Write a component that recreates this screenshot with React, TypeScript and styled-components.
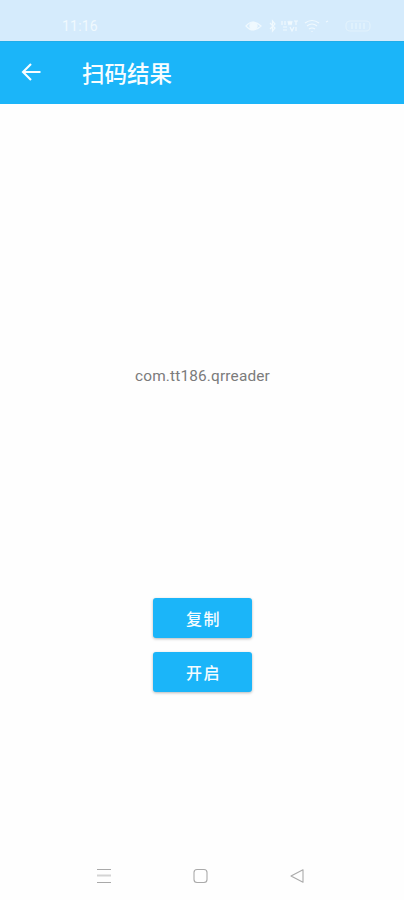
import React from "react";
import styled, { createGlobalStyle } from "styled-components";

const Global = createGlobalStyle`
  * { box-sizing: border-box; }
  html, body { margin: 0; padding: 0; background: #fefefe; }
`;

const Screen = styled.div`
  width: 100%;
  height: 900px;
  display: flex;
  flex-direction: column;
  background: #fefefe;
  overflow: hidden;
  font-family: Roboto, "Noto Sans CJK SC", sans-serif;
`;

const StatusBar = styled.header`
  height: 41px;
  flex: none;
  display: flex;
  align-items: center;
  justify-content: space-between;
  padding: 11px 32px 0 62px;
  background: #d5ebfc;
  color: #f0f9fe;
`;

const Clock = styled.span`
  font-size: 14px;
  line-height: 16px;
  letter-spacing: 0.2px;
`;

const StatusIcons = styled.div`
  display: flex;
  align-items: center;

  svg { display: block; }
`;

const AppBar = styled.nav`
  height: 63px;
  flex: none;
  display: flex;
  align-items: center;
  padding-left: 21px;
  background: #1bb5f9;
  border-top: 1px solid #20ade9;
  color: #f7fdff;
`;

const BackButton = styled.button`
  width: 21px;
  height: 20px;
  margin-bottom: 2px;
  padding: 0;
  border: 0;
  background: none;
  color: inherit;

  svg { display: block; }
`;

const Title = styled.h1`
  margin: 2px 0 0 40px;
  font-size: 22.5px;
  line-height: 30px;
  font-weight: 500;
`;

const Content = styled.main`
  flex: 1;
  display: flex;
  flex-direction: column;
  align-items: center;
  padding-top: 262px;
`;

const Result = styled.p`
  margin: 0 0 0 1px;
  height: 20px;
  font-size: 15.4px;
  line-height: 20px;
  letter-spacing: 0.16px;
  color: #7b7b7b;
`;

const Actions = styled.div`
  display: flex;
  flex-direction: column;
  gap: 14px;
  margin-top: 212px;
`;

const ActionButton = styled.button`
  width: 99px;
  height: 40px;
  padding: 3px 0 0 3px;
  border: 0;
  border-radius: 3px;
  background: #1bb5f9;
  box-shadow: 0 1px 3px rgba(0, 0, 0, 0.28);
  color: #f5fcff;
  font: 500 16px/20px Roboto, "Noto Sans CJK SC", sans-serif;
  letter-spacing: 1.4px;
`;

const SystemNav = styled.footer`
  height: 48px;
  flex: none;
  display: flex;
  justify-content: space-between;
  align-items: center;
  padding: 0 99px 0 96px;

  svg { display: block; }
`;

export default function App() {
  return (
    <Screen>
      <Global />
      <StatusBar>
        <Clock>11:16</Clock>
        <StatusIcons>
          <svg width="127" height="16" viewBox="0 0 127 16" fill="none" stroke="currentColor" strokeWidth="1.2">
            <path d="M1 8Q8 0 16 8Q8 16 1 8Z" />
            <circle cx="8.5" cy="8" r="3.6" fill="currentColor" />
            <path d="M25 5l5 5-2.5 3V3L30 6l-5 5" />
            <path d="M37 3v4M40 3v4M43 3l1 4 1-4 1 4 1-4M49 3h4M51 3v4M38 9h4M38 12h4M45 9l2 4 2-4M51 9v4" />
            <path d="M60 5q7-5 14 0M62 8q5-4 10 0M64 11q3-2 6 0M67 13v1" />
            <path d="M81 4l2-1" />
            <rect x="101" y="3" width="24" height="10" rx="4" opacity=".5" />
            <path d="M107 5v6M111 5v6M115 5v6M119 5v6" opacity=".65" />
          </svg>
        </StatusIcons>
      </StatusBar>
      <AppBar>
        <BackButton aria-label="返回">
          <svg width="21" height="20" viewBox="0 0 21 20" fill="none" stroke="currentColor" strokeWidth="2.1">
            <path d="M19.5 10H2.5M10 2L2 10l8 8" />
          </svg>
        </BackButton>
        <Title>扫码结果</Title>
      </AppBar>
      <Content>
        <Result>com.tt186.qrreader</Result>
        <Actions>
          <ActionButton>复制</ActionButton>
          <ActionButton>开启</ActionButton>
        </Actions>
      </Content>
      <SystemNav>
        <svg width="15" height="16" viewBox="0 0 15 16" fill="none" stroke="#a9a9a9">
          <path d="M1 1.5h14M1 14.5h14" />
          <path d="M1 7.5h14" strokeWidth="2" stroke="#d4d4d4" />
        </svg>
        <svg width="16" height="16" viewBox="0 0 16 16" fill="none" stroke="#aaa" strokeWidth="1.1">
          <rect x="2" y="1.5" width="13" height="13" rx="3" />
        </svg>
        <svg width="16" height="16" viewBox="0 0 16 16" fill="none" stroke="#aaa" strokeLinejoin="round" strokeWidth="1.1">
          <path d="M14 1.8v12.4L2 8z" />
        </svg>
      </SystemNav>
    </Screen>
  );
}
